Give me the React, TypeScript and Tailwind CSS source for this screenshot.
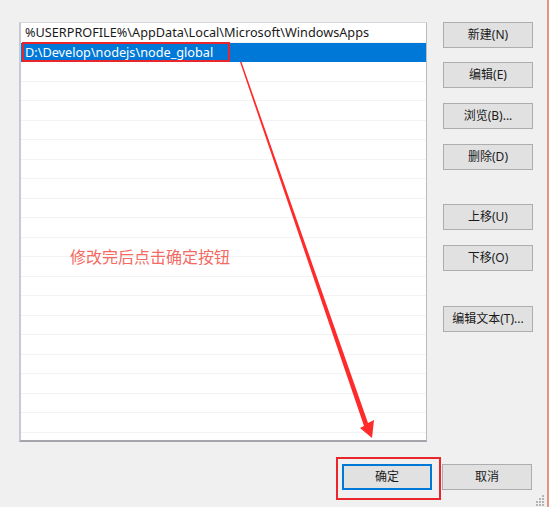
import React from 'react'

const ROWS = 22

const sideButtons = [
  { label: '新建(N)', gap: 'mt-0' },
  { label: '编辑(E)', gap: 'mt-[14px]' },
  { label: '浏览(B)...', gap: 'mt-[15px]' },
  { label: '删除(D)', gap: 'mt-[15px]' },
  { label: '上移(U)', gap: 'mt-[34px]' },
  { label: '下移(O)', gap: 'mt-[15px]' },
  { label: '编辑文本(T)...', gap: 'mt-[35px]' },
]

const FONT = "font-['Segoe_UI','Noto_Sans','Noto_Sans_CJK_SC',sans-serif]"

export default function App() {
  return (
    <div
      className={`relative h-[507px] w-[549px] overflow-hidden border-r-2 border-[#e3957e] bg-[#f0f0f0] pl-[19px] pt-[22px] ${FONT}`}
    >
      <div className="flex">
        {/* path list */}
        <div className="h-[420px] w-[408px] overflow-hidden border-b-2 border-l-2 border-r border-t border-b-[#a3a5ab] border-l-[#c9cad1] border-r-[#b9bbc2] border-t-[#d6d7dc] bg-white">
          {Array.from({ length: ROWS }).map((_, i) => {
            const text =
              i === 0 ? '%USERPROFILE%\\AppData\\Local\\Microsoft\\WindowsApps' : i === 1 ? 'D:\\Develop\\nodejs\\node_global' : ''
            const selected = i === 1
            return (
              <div
                key={i}
                className={`flex h-[19.5px] items-center whitespace-nowrap border-b-[1.5px] pl-[4px] pt-[1px] text-[12.7px] leading-none ${
                  selected ? 'border-[#0078d7] bg-[#0078d7] text-white' : 'border-[#f3f3f3] text-[#1a1a1a]'
                }`}
              >
                {text}
              </div>
            )
          })}
        </div>

        {/* side buttons */}
        <div className="ml-[16px] flex w-[90px] flex-col">
          {sideButtons.map((b) => (
            <WinButton key={b.label} className={b.gap}>
              {b.label}
            </WinButton>
          ))}
        </div>
      </div>

      {/* bottom buttons */}
      <div className="mr-[15px] mt-[22px] flex justify-end gap-[10px]">
        <WinButton focused>确定</WinButton>
        <WinButton>取消</WinButton>
      </div>

      {/* annotations */}
      <div className="absolute left-[22px] top-[42px] h-[20px] w-[208px] border-2 border-[#e8262b]" />
      <div className="absolute left-[336px] top-[457px] h-[43px] w-[105px] border-2 border-[#e8262b]" />
      <div className="absolute left-[70px] top-[245px] font-['Noto_Sans_CJK_SC',sans-serif] text-[16px] leading-[22px] text-[#f46a63]">
        修改完后点击确定按钮
      </div>
      <svg className="pointer-events-none absolute left-0 top-0" width="549" height="507" viewBox="0 0 549 507">
        <polygon points="240,62 241.5,62 368,423 374,420 372,438 360,428 364,426" fill="#ff2a2a" />
      </svg>

      {/* size grip */}
      <svg className="absolute bottom-[1px] right-[2px]" width="11" height="11" viewBox="0 0 11 11">
        {[
          [8, 0],
          [8, 3],
          [5, 3],
          [8, 6],
          [5, 6],
          [2, 6],
          [8, 9],
          [5, 9],
          [2, 9],
        ].map(([x, y]) => (
          <rect key={`${x}-${y}`} x={x} y={y} width="2" height="2" fill="#b4b4b4" />
        ))}
      </svg>
    </div>
  )
}

function WinButton({
  children,
  className = '',
  focused = false,
}: {
  children: React.ReactNode
  className?: string
  focused?: boolean
}) {
  return (
    <button
      type="button"
      className={`flex h-[26px] w-[90px] items-center justify-center bg-[#e1e1e1] text-[12px] text-[#1a1a1a] ${
        focused ? 'border-2 border-[#0078d7]' : 'border border-[#adadad]'
      } ${className}`}
    >
      {children}
    </button>
  )
}
